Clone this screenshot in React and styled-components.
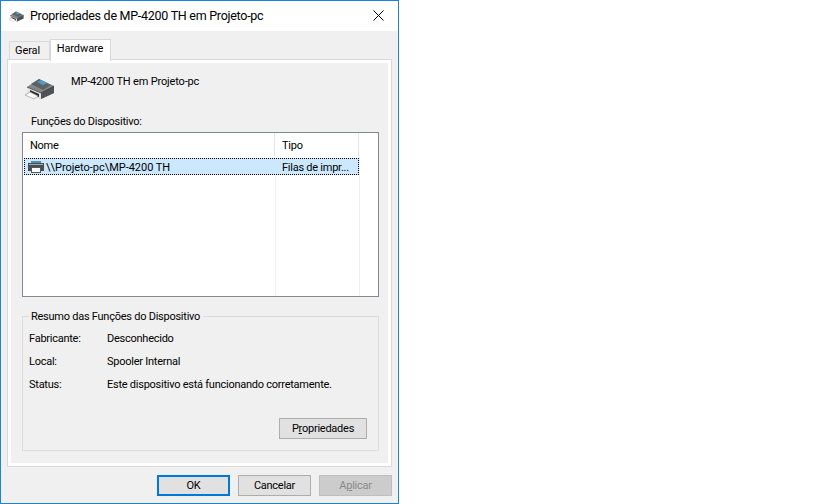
import React from "react";
import styled, { createGlobalStyle } from "styled-components";

const Global = createGlobalStyle`
  html, body { margin: 0; padding: 0; background: #fff; }
  * { box-sizing: border-box; }
`;

const Window = styled.div`
  width: 399px;
  height: 504px;
  border: 1px solid #1883d7;
  background: #f0f0f0;
  display: flex;
  flex-direction: column;
  font-family: "Roboto", "Liberation Sans", sans-serif;
  font-size: 11px;
  letter-spacing: -0.25px;
  color: #000;
`;

const TitleBar = styled.div`
  height: 30px;
  background: #fff;
  display: flex;
  align-items: center;
  padding: 0 14px 0 8px;
  flex: none;
`;

const Title = styled.div`
  margin-left: 5px;
  font-size: 12.5px;
  letter-spacing: -0.27px;
  flex: 1;
  white-space: nowrap;
  padding-bottom: 2px;
`;

const CloseBox = styled.div`
  display: flex;
  padding-bottom: 1px;
`;

const Tabs = styled.div`
  height: 28px;
  flex: none;
  display: flex;
  align-items: flex-end;
  padding: 8px 0 0 8px;
  position: relative;
  z-index: 1;
`;

const Tab = styled.div`
  border: 1px solid #d9d9d9;
  border-bottom: none;
  display: flex;
  align-items: center;
  justify-content: center;
  letter-spacing: -0.1px;
  background: ${p => (p.$active ? "#fff" : "#f0f0f0")};
  width: ${p => p.$w}px;
  height: ${p => (p.$active ? 22 : 18)}px;
  margin-bottom: ${p => (p.$active ? -2 : 0)}px;
  padding: 0 ${p => (p.$active ? 1 : 4)}px ${p => (p.$active ? 4 : 1)}px 0;
`;

const Panel = styled.div`
  margin: 0 6px;
  height: 408px;
  flex: none;
  border: 1px solid #d9d9d9;
  box-shadow: inset 0 0 0 3px #fff;
  padding: 3px;
`;

const PanelBody = styled.div`
  height: 100%;
  background: #f0f0f0;
  padding: 0 9px 0 11px;
  display: flex;
  flex-direction: column;
`;

const DeviceHead = styled.div`
  display: flex;
  align-items: flex-start;
  height: 51px;
  flex: none;
  padding: 13px 0 0 3px;
`;

const DeviceName = styled.div`
  margin-left: 14px;
  margin-top: -1px;
  letter-spacing: -0.17px;
`;

const SectionLabel = styled.div`
  height: 18px;
  padding-left: 9px;
  line-height: 16px;
  flex: none;
`;

const ListBox = styled.div`
  height: 165px;
  flex: none;
  border: 1px solid #828790;
  background: #fff;
  display: flex;
  flex-direction: column;
  position: relative;
`;

const HeaderRow = styled.div`
  display: grid;
  grid-template-columns: 252px 84px 1fr;
  height: 23px;
  flex: none;
`;

const HeaderCell = styled.div`
  padding: 3px 0 0 7px;
  line-height: 20px;
  border-right: 1px solid #e5e5e5;
  &:last-child { border-right: none; }
`;

const ColumnLines = styled.div`
  position: absolute;
  inset: 23px 0 0 0;
  pointer-events: none;
`;

const ColumnLine = styled.div`
  position: absolute;
  top: 0;
  bottom: 0;
  left: ${p => p.$x}px;
  width: 1px;
  background: #f0f0f0;
`;

const Row = styled.div`
  margin: 2px 0 0 1px;
  width: 335px;
  height: 17px;
  background: #cce8ff;
  outline: 1px dotted #000;
  outline-offset: -1px;
  display: grid;
  grid-template-columns: 251px 84px;
  position: relative;
  z-index: 1;
`;

const RowCell = styled.div`
  display: flex;
  align-items: center;
  padding: 1px 0 0 ${p => p.$pad}px;
  white-space: nowrap;
`;

const RowText = styled.span`
  margin-left: 2px;
  letter-spacing: -0.03px;
`;

const Group = styled.div`
  margin-top: 19px;
  height: 135px;
  flex: none;
  border: 1px solid #dcdcdc;
  position: relative;
  padding: 10px 6px 0;
  display: flex;
  flex-direction: column;
`;

const Legend = styled.div`
  position: absolute;
  left: 6px;
  top: -8px;
  background: #f0f0f0;
  padding: 0 3px 0 2px;
  line-height: 15px;
`;

const InfoRow = styled.div`
  display: grid;
  grid-template-columns: 78px 1fr;
  height: 23px;
  line-height: 23px;
  white-space: nowrap;
`;

const GroupActions = styled.div`
  display: flex;
  justify-content: flex-end;
  padding: 22px 5px 0 0;
`;

const Button = styled.button`
  font: inherit;
  letter-spacing: inherit;
  color: ${p => (p.$disabled ? "#8a8a8a" : "#000")};
  width: ${p => p.$w}px;
  height: 21px;
  padding: 0 0 1px;
  background: ${p => (p.$disabled ? "#cccccc" : "#e1e1e1")};
  border: ${p => (p.$primary ? "2px solid #0078d7" : p.$disabled ? "1px solid #bfbfbf" : "1px solid #adadad")};
  text-align: center;
  u { text-decoration: underline; text-underline-offset: 1px; }
`;

const Footer = styled.div`
  flex: 1;
  display: flex;
  justify-content: flex-end;
  gap: 8px;
  padding: 8px 6px 0 0;
`;

const Printer = ({ w = 32, h = 26 }) => (
  <svg width={w} height={h} viewBox="0 0 32 26" style={{ flex: "none" }}>
    <path d="M2 11 L14 3 L29 10 L29 17 L16 23 L2 17 Z" fill="#85888b" />
    <path d="M2 11 L16 17 L16 23 L2 17 Z" fill="#e4e4e4" />
    <path d="M16 17 L29 10 L29 17 L16 23 Z" fill="#4f5255" />
    <path d="M6 8 L14 3 L26 9 L18 14 Z" fill="#5e6265" />
    <path d="M12 6 L16 4 L22 7 L18 9 Z" fill="#4f9cc9" />
    <path d="M2 11 L16 17 L29 10" fill="none" stroke="#3e4144" strokeWidth="0.8" />
    <path d="M5 14 L14 18 L14 21 L5 17 Z" fill="#2a2c2e" />
    <path d="M0 19 L5 16 L13 20 L9 23 Z" fill="#fff" stroke="#8a8a8a" strokeWidth="0.6" />
  </svg>
);

const PrinterSmall = () => (
  <svg width="16" height="12" viewBox="0 0 16 12" style={{ flex: "none" }}>
    <rect x="3" y="0" width="10" height="2" fill="#4a8fb5" />
    <rect x="0" y="2" width="16" height="8" fill="#4a4d50" />
    <rect x="1" y="3" width="14" height="1" fill="#a8acae" />
    <rect x="3.5" y="6.5" width="9" height="5" fill="#fff" stroke="#55585b" strokeWidth="1" />
  </svg>
);

const Close = () => (
  <svg width="11" height="11" viewBox="0 0 11 11" style={{ flex: "none" }}>
    <path d="M0.5 0.5 L10.5 10.5 M10.5 0.5 L0.5 10.5" stroke="#000" strokeWidth="1" />
  </svg>
);

export default function App() {
  return (
    <>
      <Global />
      <Window>
        <TitleBar>
          <Printer w={16} h={13} />
          <Title>Propriedades de MP-4200 TH em Projeto-pc</Title>
          <CloseBox><Close /></CloseBox>
        </TitleBar>
        <Tabs>
          <Tab $w={41}>Geral</Tab>
          <Tab $active $w={61}>Hardware</Tab>
        </Tabs>
        <Panel>
          <PanelBody>
            <DeviceHead>
              <Printer />
              <DeviceName>MP-4200 TH em Projeto-pc</DeviceName>
            </DeviceHead>
            <SectionLabel>Funções do Dispositivo:</SectionLabel>
            <ListBox>
              <HeaderRow>
                <HeaderCell>Nome</HeaderCell>
                <HeaderCell>Tipo</HeaderCell>
                <HeaderCell />
              </HeaderRow>
              <ColumnLines>
                <ColumnLine $x={252} />
                <ColumnLine $x={336} />
              </ColumnLines>
              <Row>
                <RowCell $pad={4}>
                  <PrinterSmall />
                  <RowText>\\Projeto-pc\MP-4200 TH</RowText>
                </RowCell>
                <RowCell $pad={7}>Filas de impr...</RowCell>
              </Row>
            </ListBox>
            <Group>
              <Legend>Resumo das Funções do Dispositivo</Legend>
              <InfoRow><span>Fabricante:</span><span>Desconhecido</span></InfoRow>
              <InfoRow><span>Local:</span><span>Spooler Internal</span></InfoRow>
              <InfoRow><span>Status:</span><span>Este dispositivo está funcionando corretamente.</span></InfoRow>
              <GroupActions>
                <Button $w={88}>P<u>r</u>opriedades</Button>
              </GroupActions>
            </Group>
          </PanelBody>
        </Panel>
        <Footer>
          <Button $primary $w={73}>OK</Button>
          <Button $w={73}>Cancelar</Button>
          <Button $disabled $w={73}>A<u>p</u>licar</Button>
        </Footer>
      </Window>
    </>
  );
}
